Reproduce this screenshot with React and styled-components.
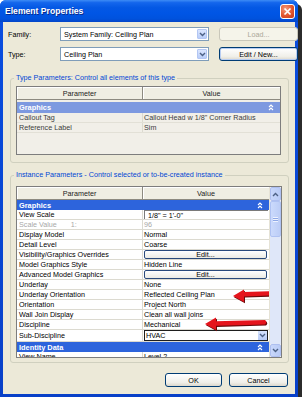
import React from 'react';
import styled, { createGlobalStyle } from 'styled-components';

const GlobalStyle = createGlobalStyle`
  html, body {
    margin: 0;
    padding: 0;
    background: #fff;
  }
  body {
    font-family: "Liberation Sans", Arial, sans-serif;
    font-size: 7.2px;
    color: #000;
  }
`;

const typeRows = [
  { name: 'Callout Tag', value: 'Callout Head w 1/8" Corner Radius' },
  { name: 'Reference Label', value: 'Sim' },
];

const instanceRows = [
  { group: 'Graphics' },
  { name: 'View Scale', value: '1/8" = 1\'-0"', kind: 'field' },
  { name: 'Scale Value', extra: '1:', value: '96', muted: true },
  { name: 'Display Model', value: 'Normal' },
  { name: 'Detail Level', value: 'Coarse' },
  { name: 'Visibility/Graphics Overrides', value: 'Edit...', kind: 'button' },
  { name: 'Model Graphics Style', value: 'Hidden Line' },
  { name: 'Advanced Model Graphics', value: 'Edit...', kind: 'button' },
  { name: 'Underlay', value: 'None' },
  { name: 'Underlay Orientation', value: 'Reflected Ceiling Plan' },
  { name: 'Orientation', value: 'Project North' },
  { name: 'Wall Join Display', value: 'Clean all wall joins' },
  { name: 'Discipline', value: 'Mechanical' },
  { name: 'Sub-Discipline', value: 'HVAC', kind: 'combo' },
  { group: 'Identity Data' },
  { name: 'View Name', value: 'Level 2' },
];

const Chevron = ({ dir = 'down', color = '#4d6185' }) => (
  <svg width="7" height="5" viewBox="0 0 7 5">
    <polyline
      points={dir === 'down' ? '1,1 3.5,3.5 6,1' : '1,4 3.5,1.5 6,4'}
      fill="none"
      stroke={color}
      strokeWidth="1.4"
    />
  </svg>
);

const Collapse = () => (
  <svg width="6" height="7" viewBox="0 0 6 7">
    <polyline points="1,3 3,1 5,3" fill="none" stroke="#fff" strokeWidth="1.1" />
    <polyline points="1,6 3,4 5,6" fill="none" stroke="#fff" strokeWidth="1.1" />
  </svg>
);

const arrowPaths = [
  'M36 14 L47 7.5 L47 10 L72 9.2 Q74.5 11.4 72 13.6 L47 14.4 L47 20 Z',
  'M8 42 L19 35.5 L19 39.2 L68 38 Q70.5 40.2 68 42.4 L19 43.8 L19 48 Z',
];

const Arrows = () => (
  <ArrowLayer width="80" height="52" viewBox="0 0 80 52">
    <g fill="#6b0a0a" transform="translate(1,1.2)">
      {arrowPaths.map((d) => <path key={d} d={d} />)}
    </g>
    <g fill="#e5141c">
      {arrowPaths.map((d) => <path key={d} d={d} />)}
    </g>
  </ArrowLayer>
);

const App = () => (
  <>
    <GlobalStyle />
    <Window>
      <TitleBar>
        <Title>Element Properties</Title>
        <CloseButton>
          <svg width="9" height="9" viewBox="0 0 9 9">
            <path d="M1.5 1.5 L7.5 7.5 M7.5 1.5 L1.5 7.5" stroke="#fff" strokeWidth="1.7" />
          </svg>
        </CloseButton>
      </TitleBar>

      <Body>
        <FormGrid>
          <FieldLabel>Family:</FieldLabel>
          <Combo>
            <ComboText>System Family: Ceiling Plan</ComboText>
            <ComboArrow><Chevron /></ComboArrow>
          </Combo>
          <Button $disabled>Load...</Button>

          <FieldLabel>Type:</FieldLabel>
          <Combo>
            <ComboText>Ceiling Plan</ComboText>
            <ComboArrow><Chevron /></ComboArrow>
          </Combo>
          <Button $focused>Edit / New...</Button>
        </FormGrid>

        <Group $top={12} $padTop={3} $padBottom={7} $padRight={7}>
          <GroupLabel>Type Parameters: Control all elements of this type</GroupLabel>
          <Table $height={69}>
            <List>
              <HeaderRow>
                <HeaderCell>Parameter</HeaderCell>
                <HeaderCell>Value</HeaderCell>
              </HeaderRow>
              <Rows $padTop={2}>
                <GroupRow $tone="inactive" $height={11}>
                  <span>Graphics</span>
                  <Collapse />
                </GroupRow>
                {typeRows.map((r) => (
                  <Row key={r.name} $readonly>
                    <NameCell>{r.name}</NameCell>
                    <ValueCell>{r.value}</ValueCell>
                  </Row>
                ))}
              </Rows>
            </List>
          </Table>
        </Group>

        <Group $top={7} $padTop={6} $padBottom={4} $padRight={6}>
          <GroupLabel>Instance Parameters - Control selected or to-be-created instance</GroupLabel>
          <Table $height={172}>
            <List>
              <HeaderRow>
                <HeaderCell>Parameter</HeaderCell>
                <HeaderCell>Value</HeaderCell>
              </HeaderRow>
              <Rows>
                {instanceRows.map((r) =>
                  r.group ? (
                    <GroupRow key={r.group} $height={10}>
                      <span>{r.group}</span>
                      <Collapse />
                    </GroupRow>
                  ) : (
                    <Row key={r.name} $tall={r.kind === 'combo'}>
                      <NameCell $muted={r.muted}>
                        {r.name}
                        {r.extra && <Extra>{r.extra}</Extra>}
                      </NameCell>
                      <ValueCell $muted={r.muted}>
                        {r.kind === 'button' && <CellButton>{r.value}</CellButton>}
                        {r.kind === 'field' && <CellField>{r.value}</CellField>}
                        {r.kind === 'combo' && (
                          <CellCombo>
                            <span>{r.value}</span>
                            <CellComboArrow><Chevron /></CellComboArrow>
                          </CellCombo>
                        )}
                        {!r.kind && r.value}
                      </ValueCell>
                    </Row>
                  )
                )}
              </Rows>
              <Arrows />
            </List>
            <Scrollbar>
              <ScrollButton $height={12}><Chevron dir="up" /></ScrollButton>
              <Track>
                <Thumb>
                  <Grip />
                </Thumb>
              </Track>
              <ScrollButton $height={11}><Chevron /></ScrollButton>
            </Scrollbar>
          </Table>
        </Group>

        <Footer>
          <Button $width={57}>OK</Button>
          <Button $width={59}>Cancel</Button>
        </Footer>
      </Body>
    </Window>
  </>
);

const Window = styled.div`
  width: 298px;
  height: 397px;
  display: flex;
  flex-direction: column;
  background: linear-gradient(#0a4ee0, #0840c8);
  border-radius: 6px 6px 0 0;
  box-shadow: 0 4px 0 #2b2b2b, 4px 4px 0 #2b2b2b;
`;

const TitleBar = styled.div`
  height: 22px;
  flex: none;
  display: flex;
  align-items: center;
  justify-content: space-between;
  padding: 0 3px 0 5px;
  border-radius: 6px 6px 0 0;
  background: linear-gradient(
    #3d8cf5 0%,
    #1466ec 12%,
    #0458e4 35%,
    #0055e5 60%,
    #0052dd 85%,
    #0445c8 100%
  );
`;

const Title = styled.span`
  color: #fff;
  font-family: "Liberation Sans", Arial, sans-serif;
  font-weight: bold;
  font-size: 8.6px;
  text-shadow: 1px 1px 0 #0b2a8a;
`;

const CloseButton = styled.div`
  width: 15px;
  height: 15px;
  box-sizing: border-box;
  border: 1px solid #fff;
  border-radius: 3px;
  background: radial-gradient(circle at 35% 30%, #f29a7c, #e2552e 55%, #c4391a);
  display: flex;
  align-items: center;
  justify-content: center;
`;

const Body = styled.div`
  flex: 1;
  margin: 0 3px 3px;
  background: #ece9d8;
  padding-top: 5px;
  display: flex;
  flex-direction: column;
`;

const FormGrid = styled.div`
  display: grid;
  grid-template-columns: 42px 149px 79px;
  grid-auto-rows: 14px;
  column-gap: 10px;
  row-gap: 6px;
  padding-left: 5px;
  align-items: center;
`;

const FieldLabel = styled.span`
  font-size: 7.2px;
`;

const Combo = styled.div`
  height: 14px;
  box-sizing: border-box;
  display: flex;
  align-items: center;
  background: #fff;
  border: 1px solid #7f9db9;
  padding: 1px;
`;

const ComboText = styled.span`
  flex: 1;
  padding-left: 2px;
  font-size: 7.2px;
`;

const ComboArrow = styled.span`
  width: 10px;
  height: 100%;
  display: flex;
  align-items: center;
  justify-content: center;
  background: linear-gradient(#dbe6fe, #b9cdf8);
  border: 1px solid #b3c6f3;
  box-sizing: border-box;
  border-radius: 1px;
`;

const Button = styled.div`
  width: ${(p) => (p.$width ? `${p.$width}px` : 'auto')};
  height: 14px;
  box-sizing: border-box;
  display: flex;
  align-items: center;
  justify-content: center;
  font-size: 7.2px;
  border-radius: 3px;
  border: 1px solid ${(p) => (p.$disabled ? '#c9c7ba' : '#003c74')};
  color: ${(p) => (p.$disabled ? '#aca899' : '#000')};
  background: ${(p) =>
    p.$disabled ? '#f5f4ea' : 'linear-gradient(#ffffff, #f0efe9 70%, #dcd8cc)'};
  box-shadow: ${(p) => (p.$focused ? 'inset 0 0 0 1px #b8cdf2' : 'none')};
`;

const Group = styled.fieldset`
  margin: ${(p) => p.$top}px 6px 0 7px;
  padding: ${(p) => `${p.$padTop}px ${p.$padRight}px ${p.$padBottom}px 5px`};
  border: 1px solid #d0d0bf;
  border-radius: 3px;
  min-width: 0;
`;

const GroupLabel = styled.legend`
  padding: 0 2px;
  margin-left: -2px;
  color: #0046d5;
  font-size: 7.2px;
  line-height: 10px;
`;

const Table = styled.div`
  height: ${(p) => p.$height}px;
  box-sizing: border-box;
  display: flex;
  border: 1px solid #7d7d7d;
  background: #f1efe8;
  overflow: hidden;
`;

const List = styled.div`
  flex: 1;
  min-width: 0;
  position: relative;
  display: flex;
  flex-direction: column;
  overflow: hidden;
`;

const HeaderRow = styled.div`
  display: grid;
  grid-template-columns: 126px 1fr;
  height: 12px;
  flex: none;
  background: #efeee3;
  border-bottom: 1px solid #8c8a80;
`;

const HeaderCell = styled.div`
  display: flex;
  align-items: center;
  justify-content: center;
  font-size: 7.2px;
  color: #222;
  border-right: 1px solid #8c8a80;
  box-shadow: inset 1px 1px 0 #fff;
  &:last-child {
    border-right: none;
  }
`;

const Rows = styled.div`
  padding-top: ${(p) => p.$padTop || 0}px;
  display: flex;
  flex-direction: column;
`;

const GroupRow = styled.div`
  height: ${(p) => p.$height}px;
  flex: none;
  display: flex;
  align-items: center;
  justify-content: space-between;
  padding: 0 6px 0 2px;
  background: ${(p) => (p.$tone === 'inactive' ? '#7d99e0' : '#2d64dc')};
  color: #fff;
  font-weight: bold;
  font-size: 7.4px;
`;

const Row = styled.div`
  height: ${(p) => (p.$tall ? 12 : 10)}px;
  flex: none;
  box-sizing: border-box;
  display: grid;
  grid-template-columns: 126px 1fr;
  background: ${(p) => (p.$readonly ? '#f1efe8' : '#fff')};
  border-bottom: 1px solid ${(p) => (p.$readonly ? '#e2e0d6' : '#dcdad0')};
  color: ${(p) => (p.$readonly ? '#3c3c3c' : '#000')};
`;

const NameCell = styled.div`
  display: flex;
  align-items: center;
  padding-left: 2px;
  border-right: 1px solid #dcdad0;
  color: ${(p) => (p.$muted ? '#a8a8a8' : 'inherit')};
  white-space: nowrap;
  overflow: hidden;
`;

const Extra = styled.span`
  margin-left: 14px;
`;

const ValueCell = styled.div`
  display: flex;
  align-items: center;
  padding: 0 1px;
  color: ${(p) => (p.$muted ? '#a8a8a8' : 'inherit')};
  white-space: nowrap;
  overflow: hidden;
`;

const CellButton = styled.div`
  flex: 1;
  height: 9px;
  box-sizing: border-box;
  display: flex;
  align-items: center;
  justify-content: center;
  border: 1px solid #2a4a7c;
  border-radius: 2px;
  background: linear-gradient(#fff, #ecebe4);
  margin-right: 1px;
`;

const CellField = styled.div`
  flex: 1;
  height: 10px;
  box-sizing: border-box;
  display: flex;
  align-items: center;
  padding-left: 3px;
  border-top: 1px solid #7a7a7a;
  border-left: 1px solid #7a7a7a;
`;

const CellCombo = styled.div`
  flex: 1;
  height: 11px;
  box-sizing: border-box;
  display: flex;
  align-items: center;
  justify-content: space-between;
  border: 1px solid #1e1e1e;
  padding-left: 1px;
`;

const CellComboArrow = styled.span`
  width: 9px;
  height: 9px;
  display: flex;
  align-items: center;
  justify-content: center;
  background: linear-gradient(#d6e2fd, #b6cbf7);
`;

const ArrowLayer = styled.svg`
  position: absolute;
  left: 180px;
  top: 95px;
  pointer-events: none;
`;

const Scrollbar = styled.div`
  width: 11px;
  flex: none;
  display: flex;
  flex-direction: column;
  background: #f3f1ec;
  border-left: 1px solid #e6e3d6;
`;

const ScrollButton = styled.div`
  height: ${(p) => p.$height}px;
  flex: none;
  display: flex;
  align-items: center;
  justify-content: center;
  background: linear-gradient(90deg, #c8d7fb, #b9cbf6);
  border: 1px solid #aebff0;
  border-radius: 2px;
`;

const Track = styled.div`
  flex: 1;
  display: flex;
  flex-direction: column;
  background: #dfe7f9;
`;

const Thumb = styled.div`
  height: 34px;
  display: flex;
  align-items: center;
  justify-content: center;
  background: linear-gradient(90deg, #cbdafc, #bccdf6);
  border: 1px solid #afc2f2;
  border-radius: 2px;
`;

const Grip = styled.div`
  width: 5px;
  height: 5px;
  background: repeating-linear-gradient(#eef3ff 0 1px, #8ea8e6 1px 2px);
`;

const Footer = styled.div`
  display: flex;
  justify-content: flex-end;
  gap: 7px;
  margin-top: 10px;
  padding-right: 7px;
`;

export default App;
